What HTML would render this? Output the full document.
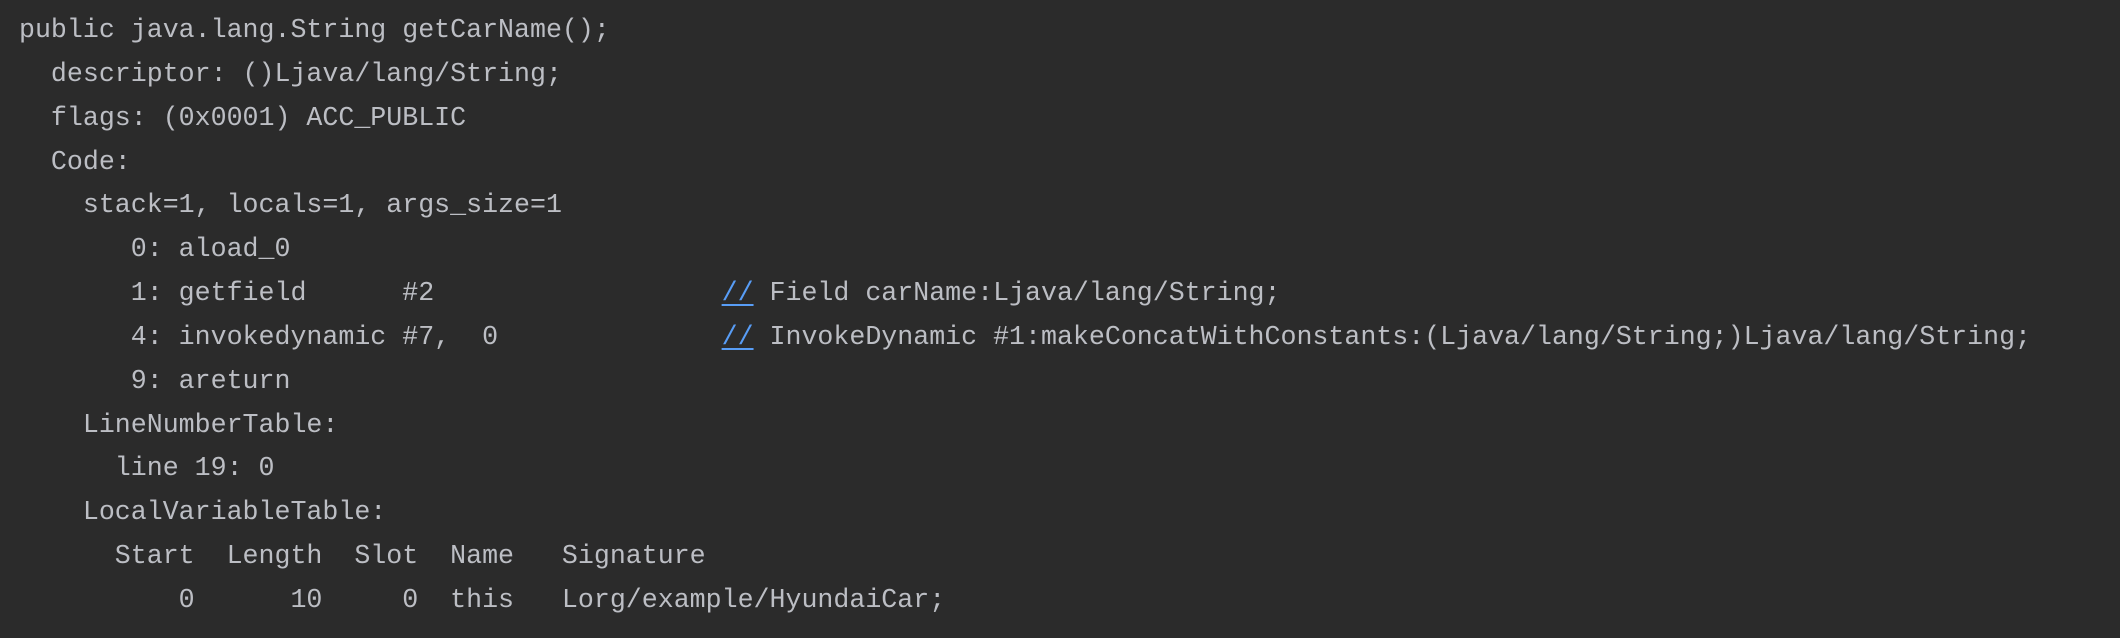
<!DOCTYPE html>
<html><head><meta charset="utf-8"><style>
html,body{margin:0;padding:0;background:#2b2b2b;width:2120px;height:638px;overflow:hidden}
pre{position:absolute;left:19px;top:9px;margin:0;font-family:"Liberation Mono",monospace;font-size:26.62px;line-height:43.85px;color:#bcbec4;white-space:pre}
.c{color:#589df6;text-decoration:underline;text-underline-offset:4px}
</style></head><body>
<pre>public java.lang.String getCarName();
  descriptor: ()Ljava/lang/String;
  flags: (0x0001) ACC_PUBLIC
  Code:
    stack=1, locals=1, args_size=1
       0: aload_0
       1: getfield      #2                  <span class="c">//</span> Field carName:Ljava/lang/String;
       4: invokedynamic #7,  0              <span class="c">//</span> InvokeDynamic #1:makeConcatWithConstants:(Ljava/lang/String;)Ljava/lang/String;
       9: areturn
    LineNumberTable:
      line 19: 0
    LocalVariableTable:
      Start  Length  Slot  Name   Signature
          0      10     0  this   Lorg/example/HyundaiCar;</pre>
</body></html>
